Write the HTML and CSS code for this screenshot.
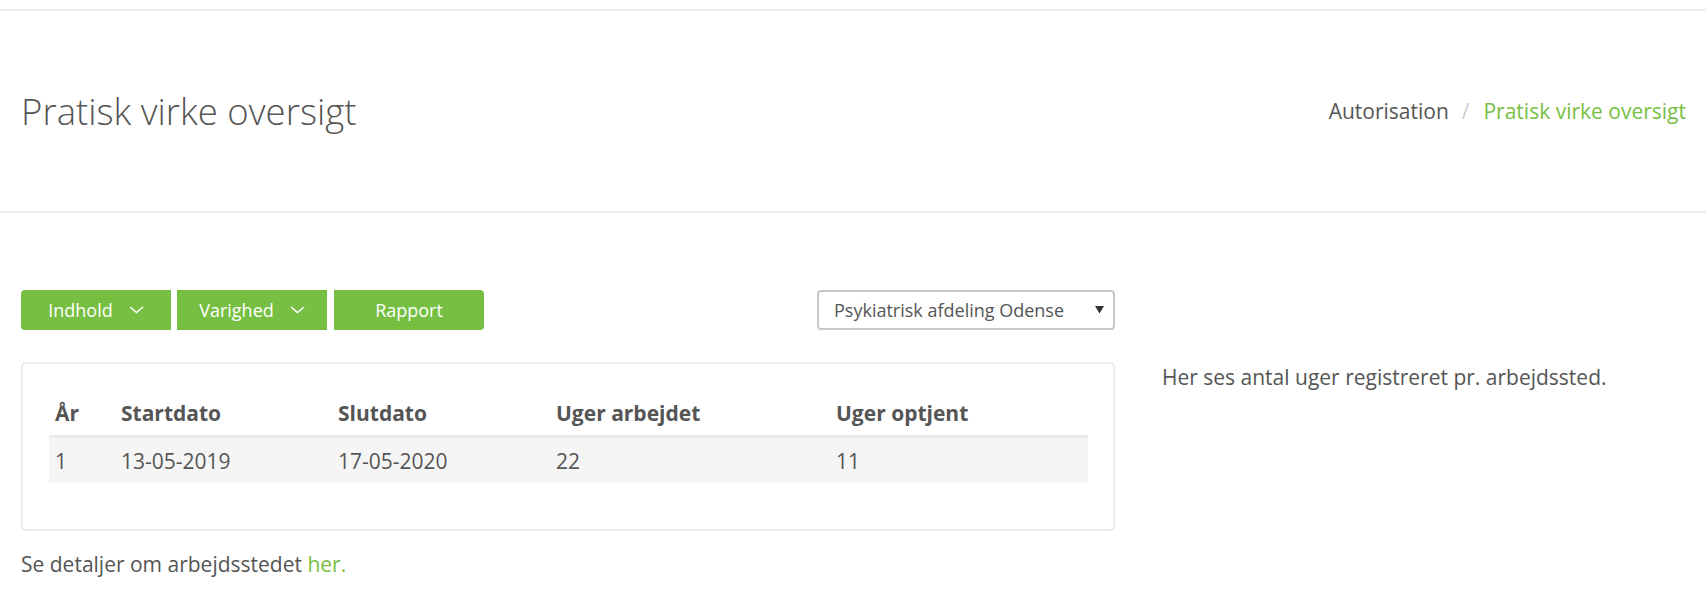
FILE: index.html
```html
<!DOCTYPE html>
<html lang="da">
<head>
<meta charset="utf-8">
<title>Pratisk virke oversigt</title>
<link rel="stylesheet" href="styles.css">
</head>
<body>
<div class="topbar"></div>
<header class="page-header">
  <h1 class="page-title">Pratisk virke oversigt</h1>
  <nav class="breadcrumb">
    <a class="crumb" href="#">Autorisation</a>
    <span class="crumb-sep">/</span>
    <span class="crumb-active">Pratisk virke oversigt</span>
  </nav>
</header>
<main class="main">
  <div class="toolbar">
    <div class="btn-group">
      <button class="btn btn-first">Indhold
        <svg class="chev" width="15" height="8" viewBox="0 0 15 8"><polyline points="1,1 7.5,6.5 14,1" fill="none" stroke="#fff" stroke-width="1.5"/></svg>
      </button>
      <button class="btn">Varighed
        <svg class="chev" width="15" height="8" viewBox="0 0 15 8"><polyline points="1,1 7.5,6.5 14,1" fill="none" stroke="#fff" stroke-width="1.5"/></svg>
      </button>
      <button class="btn btn-last">Rapport</button>
    </div>
    <div class="select">
      <span class="select-text">Psykiatrisk afdeling Odense</span>
      <svg class="select-arrow" width="9" height="8" viewBox="0 0 9 8"><polygon points="0,0 9,0 4.5,7.5" fill="#333"/></svg>
    </div>
  </div>
  <div class="content-row">
    <div class="left-col">
      <div class="card">
        <table class="table">
          <thead>
            <tr>
              <th class="c1">År</th>
              <th class="c2">Startdato</th>
              <th class="c3">Slutdato</th>
              <th class="c4">Uger arbejdet</th>
              <th class="c5">Uger optjent</th>
            </tr>
          </thead>
          <tbody>
            <tr>
              <td>1</td>
              <td>13-05-2019</td>
              <td>17-05-2020</td>
              <td>22</td>
              <td>11</td>
            </tr>
          </tbody>
        </table>
      </div>
      <p class="details">Se detaljer om arbejdsstedet <a class="link" href="#">her.</a></p>
    </div>
    <div class="right-col">
      <p class="info">Her ses antal uger registreret pr. arbejdssted.</p>
    </div>
  </div>
</main>
</body>
</html>
```

FILE: styles.css
```css
* { box-sizing: border-box; }
html, body { margin: 0; padding: 0; background: #fff; }
body {
  font-family: "Open Sans", "Liberation Sans", sans-serif;
  font-size: 21px;
  line-height: 30px;
  color: #555;
}
.topbar {
  height: 11px;
  border-bottom: 2px solid #ededed;
}
.page-header {
  height: 202px;
  border-bottom: 2px solid #ededed;
  display: flex;
  align-items: center;
  justify-content: space-between;
  padding: 0 20px 0 21px;
}
.page-title {
  margin: 0;
  font-size: 36.6px;
  line-height: 44px;
  font-weight: 300;
  color: #555;
}
.breadcrumb {
  display: flex;
  align-items: center;
  font-size: 21px;
  line-height: 30px;
}
.crumb { color: #555; text-decoration: none; }
.crumb-sep { color: #ccc; padding: 0 14px 0 13px; }
.crumb-active { color: #77bf43; }
.main {
  padding: 77px 21px 0 21px;
}
.toolbar {
  width: 1094px;
  display: flex;
  justify-content: space-between;
  align-items: center;
}
.btn-group {
  display: flex;
  gap: 6px;
}
.btn {
  width: 150px;
  height: 40px;
  border: 0;
  background: #77bf43;
  color: #fff;
  font-family: "Open Sans", "Liberation Sans", sans-serif;
  font-size: 18px;
  line-height: 24px;
  display: flex;
  align-items: center;
  justify-content: center;
  gap: 16px;
  padding: 0 0 1px 0;
  border-radius: 0;
}
.btn-first { border-radius: 4px 0 0 4px; }
.btn-last { border-radius: 0 4px 4px 0; margin-left: 1px; }
.chev { display: block; margin-top: 1px; }
.select {
  width: 298px;
  height: 40px;
  border: 2px solid #c8c8c8;
  border-radius: 4px;
  display: flex;
  align-items: center;
  justify-content: space-between;
  padding: 0 9px 0 15px;
  font-size: 18px;
  line-height: 24px;
  color: #555;
}
.select-arrow { display: block; }
.content-row {
  display: flex;
  margin-top: 32px;
  gap: 47px;
}
.left-col { width: 1094px; flex: none; }
.card {
  border: 2px solid #ececec;
  border-radius: 5px;
  padding: 26px 25px 46px 26px;
}
.table {
  width: 100%;
  border-collapse: separate;
  border-spacing: 0;
}
.table th, .table td {
  text-align: left;
  padding: 7.5px 6px;
  line-height: 30px;
  font-size: 21px;
}
.table th {
  font-weight: 700;
  color: #555;
  border-bottom: 3px solid #e8eaed;
}
.table td { background: #f5f5f5; }
.c1 { width: 66px; }
.c2 { width: 217px; }
.c3 { width: 218px; }
.c4 { width: 280px; }
.details {
  margin: 18px 0 0 0;
}
.link { color: #77bf43; text-decoration: none; }
.right-col { flex: 1; }
.info { margin: 0; }
```
